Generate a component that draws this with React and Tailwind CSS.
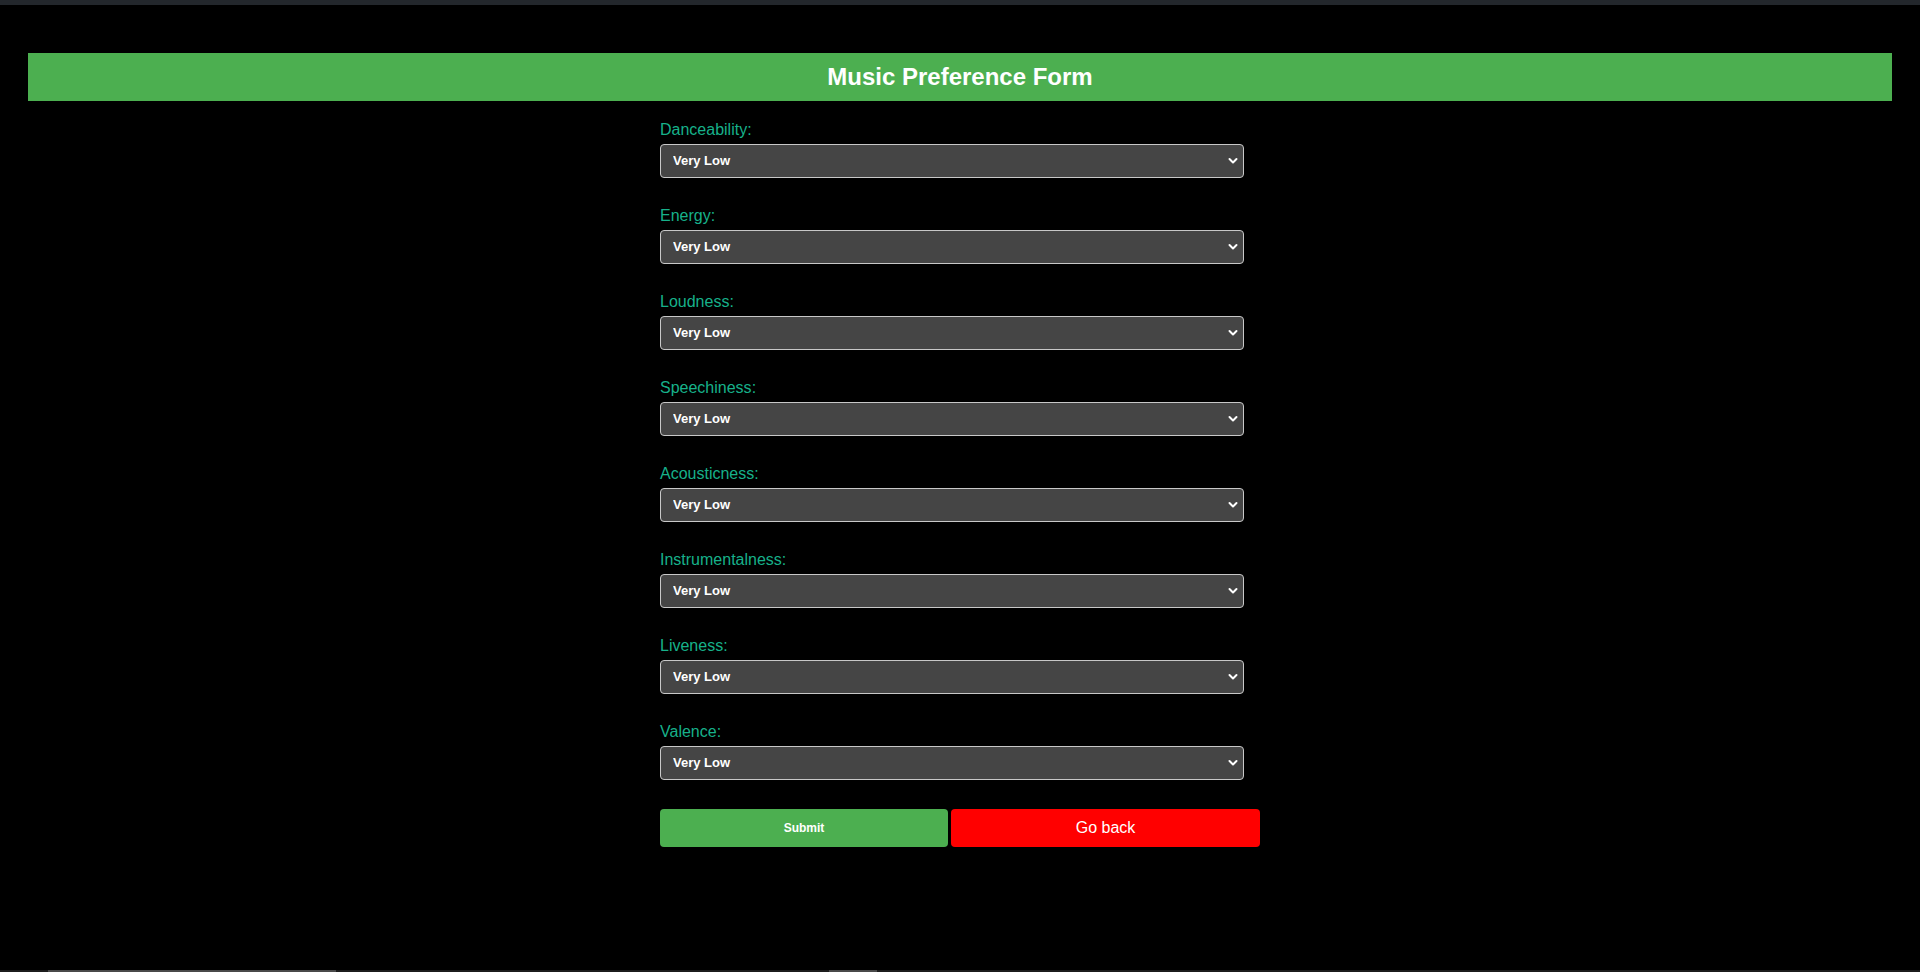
import React, { useState } from 'react';

// Music preference form — dark page, green title bar, stacked selects

const FIELDS = [
  'Danceability',
  'Energy',
  'Loudness',
  'Speechiness',
  'Acousticness',
  'Instrumentalness',
  'Liveness',
  'Valence',
];

const LEVELS = ['Very Low', 'Low', 'Medium', 'High', 'Very High'];

function Chevron() {
  return (
    <svg
      className="absolute right-[6px] top-1/2 -translate-y-1/2 pointer-events-none"
      width="10"
      height="7"
      viewBox="0 0 10 7"
      fill="none"
    >
      <path d="M1.5 1.5 L5 5 L8.5 1.5" stroke="#ffffff" strokeWidth="2" strokeLinecap="round" strokeLinejoin="round" />
    </svg>
  );
}

function Field({ name, value, onChange, last }) {
  return (
    <div className={last ? '' : 'mb-[29px]'}>
      <label className="block h-[18px] leading-[18px] mb-[5px] text-[16px] text-[#17b18a]">
        {name}:
      </label>
      <div className="relative w-[584px]">
        <select
          value={value}
          onChange={(e) => onChange(e.target.value)}
          className="appearance-none block w-full h-[34px] pl-[12px] pr-6 bg-[#454545] text-white text-[13px] font-bold border border-[#c8c8c8] rounded-[4px] outline-none"
          style={{ fontFamily: "'Liberation Sans', Arial, sans-serif" }}
        >
          {LEVELS.map((l) => (
            <option key={l} value={l}>
              {l}
            </option>
          ))}
        </select>
        <Chevron />
      </div>
    </div>
  );
}

export default function App() {
  const [values, setValues] = useState(
    Object.fromEntries(FIELDS.map((f) => [f, 'Very Low']))
  );

  return (
    <div
      className="h-screen flex flex-col bg-black overflow-hidden"
      style={{ fontFamily: "'Liberation Sans', Arial, sans-serif" }}
    >
      {/* browser chrome strip */}
      <div className="h-[5px] bg-[#23272c] shrink-0" />

      {/* Title bar */}
      <header className="mt-[48px] mx-[28px] h-[48px] bg-[#4CAF50] flex items-center justify-center shrink-0">
        <h1 className="text-white text-[24px] font-bold">Music Preference Form</h1>
      </header>

      {/* Form */}
      <form className="w-[600px] mx-auto mt-[20px]" onSubmit={(e) => e.preventDefault()}>
        {FIELDS.map((f, i) => (
          <Field
            key={f}
            name={f}
            value={values[f]}
            last={i === FIELDS.length - 1}
            onChange={(v) => setValues((s) => ({ ...s, [f]: v }))}
          />
        ))}

        <div className="mt-[29px] flex gap-[3px]">
          <button
            type="submit"
            className="w-[288px] h-[38px] bg-[#4CAF50] text-white text-[12px] font-bold rounded-[4px]"
          >
            Submit
          </button>
          <button
            type="button"
            className="w-[309px] h-[38px] bg-[#ff0000] text-white text-[16px] rounded-[4px]"
          >
            Go back
          </button>
        </div>
      </form>

      <div className="flex-1" />

      {/* scrollbar remnant at the very bottom */}
      <div className="h-[2px] bg-[#1c1c1c] shrink-0 relative">
        <div className="absolute left-[48px] w-[288px] top-0 h-[2px] bg-[#4a4a4a]" />
        <div className="absolute left-[829px] w-[48px] top-0 h-[2px] bg-[#4a4a4a]" />
      </div>
    </div>
  );
}
